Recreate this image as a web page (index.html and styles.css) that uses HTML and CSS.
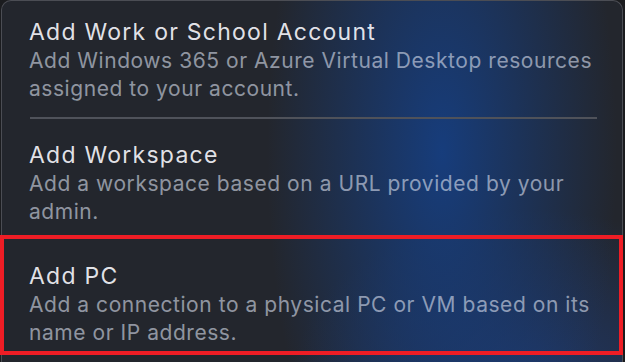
FILE: index.html
```html
<!DOCTYPE html>
<html lang="en">
<head>
    <meta charset="UTF-8">
    <meta name="viewport" content="width=device-width, initial-scale=1.0">
    <title>Add Menu</title>
    <link rel="stylesheet" href="styles.css">
</head>
<body>
    <div class="menu">
        <div class="menu-item first">
            <h2>Add Work or School Account</h2>
            <p>Add Windows 365 or Azure Virtual Desktop resources assigned to your account.</p>
        </div>
        <div class="separator"></div>
        <div class="menu-item second">
            <h2>Add Workspace</h2>
            <p>Add a workspace based on a URL provided by your admin.</p>
        </div>
        <div class="menu-item selected">
            <h2>Add PC</h2>
            <p>Add a connection to a physical PC or VM based on its name or IP address.</p>
        </div>
    </div>
</body>
</html>
```

FILE: styles.css
```css
* {
    margin: 0;
    padding: 0;
    box-sizing: border-box;
}

body {
    font-family: Inter, 'Noto Sans', sans-serif;
    background-color: #1b1c1f;
    width: 625px;
    height: 362px;
    overflow: hidden;
}

.menu {
    margin-left: 1px;
    width: 622px;
    height: 380px;
    border: 1px solid #4b4d54;
    border-bottom: none;
    border-radius: 10px 10px 0 0;
    background-color: #23262d;
    background-image:
        radial-gradient(ellipse 175px 440px at 440px 40%, rgba(22, 62, 128, 0.95), rgba(22, 62, 128, 0) 100%),
        radial-gradient(ellipse 240px 170px at 530px 100%, rgba(30, 60, 118, 0.75), rgba(30, 60, 118, 0) 100%);
}

.menu-item {
    padding: 16px 12px 14px 27px;
}

.menu-item h2 {
    font-size: 23px;
    font-weight: 400;
    line-height: 30px;
    letter-spacing: 1.25px;
    color: rgba(245, 245, 250, 0.92);
}

.menu-item p {
    font-size: 21px;
    line-height: 28px;
    letter-spacing: 0.55px;
    color: rgba(220, 225, 240, 0.6);
}

.separator {
    height: 2px;
    margin: 0 25px 0 28px;
    background-color: #4f525a;
}

.menu-item.second {
    padding-top: 21px;
    padding-bottom: 9px;
}

.menu-item.selected {
    margin: 0 -1px 0 -2px;
    height: 120px;
    padding: 22px 10px 0 25px;
    border: 4px solid #ee1d25;
}
```
